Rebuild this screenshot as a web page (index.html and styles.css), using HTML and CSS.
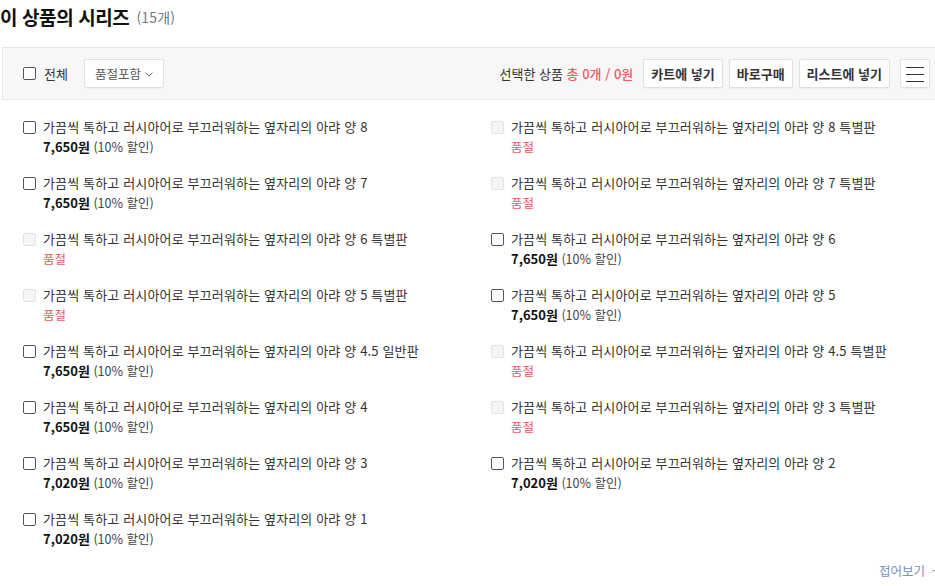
FILE: index.html
```html
<!DOCTYPE html>
<html lang="ko">
<head>
<meta charset="utf-8">
<title>이 상품의 시리즈</title>
<link rel="stylesheet" href="styles.css">
</head>
<body>
<div class="page">
  <h2 class="title"><span class="title-text">이 상품의 시리즈</span><span class="count">(15개)</span></h2>

  <div class="toolbar">
    <label class="all"><input type="checkbox" class="chk"><span>전체</span></label>
    <button class="btn filter">품절포함<svg class="caret" width="8" height="5" viewBox="0 0 8 5"><path d="M0.5 0.5 L4 4 L7.5 0.5" fill="none" stroke="#777" stroke-width="1"/></svg></button>
    <div class="spacer"></div>
    <div class="summary">선택한 상품 <em>총 0개 / 0원</em></div>
    <button class="btn action">카트에 넣기</button>
    <button class="btn action">바로구매</button>
    <button class="btn action">리스트에 넣기</button>
    <button class="btn menu"><svg width="18" height="16" viewBox="0 0 18 16"><path d="M0 1.5 H18 M0 8.5 H18 M0 15.5 H18" stroke="#333" stroke-width="1"/></svg></button>
  </div>

  <ul class="list">
    <li class="item"><input type="checkbox" class="chk"><div class="info"><div class="name">가끔씩 톡하고 러시아어로 부끄러워하는 옆자리의 아랴 양 8</div><div class="price"><b>7,650원</b> (10% 할인)</div></div></li>
    <li class="item"><input type="checkbox" class="chk" disabled><div class="info"><div class="name">가끔씩 톡하고 러시아어로 부끄러워하는 옆자리의 아랴 양 8 특별판</div><div class="soldout">품절</div></div></li>
    <li class="item"><input type="checkbox" class="chk"><div class="info"><div class="name">가끔씩 톡하고 러시아어로 부끄러워하는 옆자리의 아랴 양 7</div><div class="price"><b>7,650원</b> (10% 할인)</div></div></li>
    <li class="item"><input type="checkbox" class="chk" disabled><div class="info"><div class="name">가끔씩 톡하고 러시아어로 부끄러워하는 옆자리의 아랴 양 7 특별판</div><div class="soldout">품절</div></div></li>
    <li class="item"><input type="checkbox" class="chk" disabled><div class="info"><div class="name">가끔씩 톡하고 러시아어로 부끄러워하는 옆자리의 아랴 양 6 특별판</div><div class="soldout">품절</div></div></li>
    <li class="item"><input type="checkbox" class="chk"><div class="info"><div class="name">가끔씩 톡하고 러시아어로 부끄러워하는 옆자리의 아랴 양 6</div><div class="price"><b>7,650원</b> (10% 할인)</div></div></li>
    <li class="item"><input type="checkbox" class="chk" disabled><div class="info"><div class="name">가끔씩 톡하고 러시아어로 부끄러워하는 옆자리의 아랴 양 5 특별판</div><div class="soldout">품절</div></div></li>
    <li class="item"><input type="checkbox" class="chk"><div class="info"><div class="name">가끔씩 톡하고 러시아어로 부끄러워하는 옆자리의 아랴 양 5</div><div class="price"><b>7,650원</b> (10% 할인)</div></div></li>
    <li class="item"><input type="checkbox" class="chk"><div class="info"><div class="name">가끔씩 톡하고 러시아어로 부끄러워하는 옆자리의 아랴 양 4.5 일반판</div><div class="price"><b>7,650원</b> (10% 할인)</div></div></li>
    <li class="item"><input type="checkbox" class="chk" disabled><div class="info"><div class="name">가끔씩 톡하고 러시아어로 부끄러워하는 옆자리의 아랴 양 4.5 특별판</div><div class="soldout">품절</div></div></li>
    <li class="item"><input type="checkbox" class="chk"><div class="info"><div class="name">가끔씩 톡하고 러시아어로 부끄러워하는 옆자리의 아랴 양 4</div><div class="price"><b>7,650원</b> (10% 할인)</div></div></li>
    <li class="item"><input type="checkbox" class="chk" disabled><div class="info"><div class="name">가끔씩 톡하고 러시아어로 부끄러워하는 옆자리의 아랴 양 3 특별판</div><div class="soldout">품절</div></div></li>
    <li class="item"><input type="checkbox" class="chk"><div class="info"><div class="name">가끔씩 톡하고 러시아어로 부끄러워하는 옆자리의 아랴 양 3</div><div class="price"><b>7,020원</b> (10% 할인)</div></div></li>
    <li class="item"><input type="checkbox" class="chk"><div class="info"><div class="name">가끔씩 톡하고 러시아어로 부끄러워하는 옆자리의 아랴 양 2</div><div class="price"><b>7,020원</b> (10% 할인)</div></div></li>
    <li class="item"><input type="checkbox" class="chk"><div class="info"><div class="name">가끔씩 톡하고 러시아어로 부끄러워하는 옆자리의 아랴 양 1</div><div class="price"><b>7,020원</b> (10% 할인)</div></div></li>
  </ul>

  <div class="foot"><a class="fold" href="#">접어보기<svg class="up" width="6" height="4" viewBox="0 0 6 4"><path d="M0.5 3.5 L3 1 L5.5 3.5" fill="none" stroke="#999" stroke-width="1"/></svg></a></div>
</div>
</body>
</html>
```

FILE: styles.css
```css
html, body {
  margin: 0;
  padding: 0;
  background: #fff;
  overflow: hidden;
}
body {
  font-family: "Noto Sans CJK KR", "Noto Sans", sans-serif;
  color: #333;
  font-size: 13px;
}
.page {
  width: 940px;
}
.title {
  margin: 0;
  height: 34px;
  display: flex;
  align-items: center;
  gap: 7px;
  font-weight: 700;
}
.title-text {
  font-size: 19px;
  line-height: 34px;
  color: #111;
  letter-spacing: -0.4px;
}
.count {
  font-size: 14px;
  font-weight: 400;
  color: #777;
  line-height: 34px;
  letter-spacing: 0.2px;
}
.toolbar {
  margin: 13px 0 0 2px;
  height: 51px;
  display: flex;
  align-items: center;
  background: #f7f7f7;
  border: 1px solid #e8e8e8;
  border-right: 0;
  padding: 0 10px 0 20px;
}
.all {
  display: flex;
  align-items: center;
  font-size: 13px;
  color: #333;
  gap: 8px;
}
.chk {
  appearance: none;
  -webkit-appearance: none;
  margin: 0;
  width: 13px;
  height: 13px;
  border: 1px solid #555;
  border-radius: 2px;
  background: #fff;
  flex: none;
  box-sizing: border-box;
}
.chk:disabled {
  border-color: #e2e2e2;
  background: #f5f5f5;
}
.btn {
  font-family: inherit;
  background: #fff;
  border: 1px solid #e0e0e0;
  border-radius: 2px;
  box-shadow: 0 1px 1px rgba(0,0,0,0.04);
  height: 29px;
  padding: 0 7px;
  color: #333;
  cursor: pointer;
  display: inline-flex;
  align-items: center;
  justify-content: center;
}
.filter {
  margin-left: 16px;
  width: 80px;
  font-size: 12.5px;
  color: #555;
  gap: 4px;
}
.caret {
  margin-top: 1px;
}
.spacer {
  flex: 1;
}
.summary {
  font-size: 13px;
  color: #333;
  margin-right: 10px;
}
.summary em {
  font-style: normal;
  color: #ef5a60;
  font-weight: 500;
}
.action {
  font-size: 13px;
  font-weight: 700;
  margin-left: 6px;
}
.summary + .action {
  margin-left: 0;
}
.menu {
  width: 30px;
  padding: 0;
  margin-left: 10px;
}
.list {
  list-style: none;
  margin: 0;
  padding: 17px 0 0 23px;
  display: grid;
  grid-template-columns: 468px 1fr;
  row-gap: 16px;
}
.item {
  display: flex;
  align-items: flex-start;
  gap: 7px;
}
.item .chk {
  margin-top: 4px;
}
.info {
  line-height: 20px;
}
.name {
  font-size: 13px;
  letter-spacing: 0.15px;
  color: #333;
}
.price {
  font-size: 12.5px;
  color: #444;
}
.price b {
  font-size: 13px;
  font-weight: 700;
  color: #111;
}
.soldout {
  font-size: 12.5px;
  color: #e8585a;
}
.foot {
  display: flex;
  justify-content: flex-end;
  padding: 12px 3px 0 0;
}
.fold {
  font-size: 12.5px;
  color: #7891bb;
  text-decoration: none;
  display: inline-flex;
  align-items: center;
  gap: 6px;
}
```
